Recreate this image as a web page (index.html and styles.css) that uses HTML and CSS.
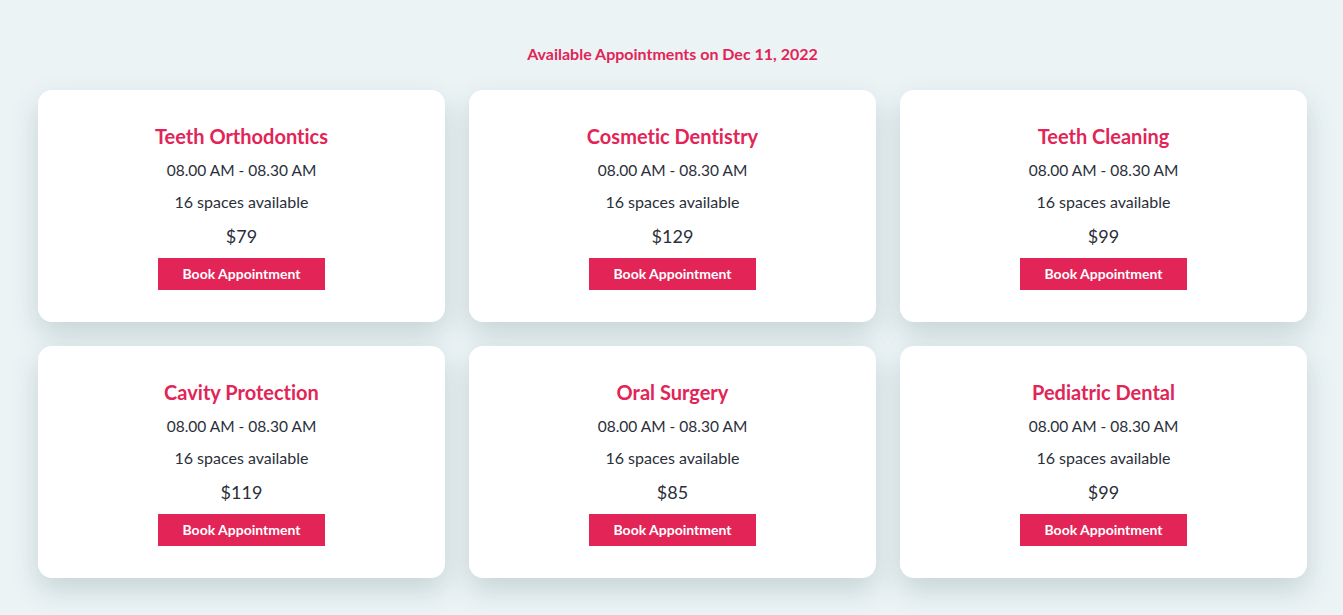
FILE: index.html
```html
<!DOCTYPE html>
<html>
<head>
<meta charset="utf-8">
<link rel="stylesheet" href="styles.css">
</head>
<body>
<main class="page">
  <h1 class="heading">Available Appointments on Dec 11, 2022</h1>
  <div class="grid">
    <div class="card">
      <h2 class="card-title">Teeth Orthodontics</h2>
      <p class="time">08.00 AM - 08.30 AM</p>
      <p class="spaces">16 spaces available</p>
      <p class="price">$79</p>
      <button class="btn">Book Appointment</button>
    </div>
    <div class="card">
      <h2 class="card-title">Cosmetic Dentistry</h2>
      <p class="time">08.00 AM - 08.30 AM</p>
      <p class="spaces">16 spaces available</p>
      <p class="price">$129</p>
      <button class="btn">Book Appointment</button>
    </div>
    <div class="card">
      <h2 class="card-title">Teeth Cleaning</h2>
      <p class="time">08.00 AM - 08.30 AM</p>
      <p class="spaces">16 spaces available</p>
      <p class="price">$99</p>
      <button class="btn">Book Appointment</button>
    </div>
    <div class="card">
      <h2 class="card-title">Cavity Protection</h2>
      <p class="time">08.00 AM - 08.30 AM</p>
      <p class="spaces">16 spaces available</p>
      <p class="price">$119</p>
      <button class="btn">Book Appointment</button>
    </div>
    <div class="card">
      <h2 class="card-title">Oral Surgery</h2>
      <p class="time">08.00 AM - 08.30 AM</p>
      <p class="spaces">16 spaces available</p>
      <p class="price">$85</p>
      <button class="btn">Book Appointment</button>
    </div>
    <div class="card">
      <h2 class="card-title">Pediatric Dental</h2>
      <p class="time">08.00 AM - 08.30 AM</p>
      <p class="spaces">16 spaces available</p>
      <p class="price">$99</p>
      <button class="btn">Book Appointment</button>
    </div>
  </div>
</main>
</body>
</html>
```

FILE: styles.css
```css
html, body {
  margin: 0;
  padding: 0;
  background: #ebf3f5;
  font-family: Lato, "Open Sans", sans-serif;
  color: #2b2f3a;
}
.page {
  padding: 44px 36px 37px 38px;
}
.heading {
  margin: 0 0 26px;
  text-align: center;
  font-size: 16px;
  line-height: 20px;
  font-weight: 700;
  color: #e22457;
}
.grid {
  display: grid;
  grid-template-columns: repeat(3, 407px);
  column-gap: 24px;
  row-gap: 24px;
}
.card {
  background: #fff;
  border-radius: 14px;
  box-shadow: 0 12px 28px rgba(40, 70, 80, 0.18);
  padding: 34px 20px 32px;
  display: flex;
  flex-direction: column;
  align-items: center;
  height: 232px;
  box-sizing: border-box;
}
.card-title {
  margin: 0;
  font-size: 20px;
  line-height: 24px;
  font-weight: 700;
  color: #e22457;
  font-variant-ligatures: none;
}
.time {
  margin: 10px 0 0;
  font-size: 15.5px;
  line-height: 24px;
}
.spaces {
  margin: 8px 0 0;
  font-size: 16px;
  line-height: 24px;
}
.price {
  margin: 9px 0 0;
  font-size: 18px;
  line-height: 26px;
}
.btn {
  margin-top: 9px;
  width: 167px;
  height: 32px;
  border: 0;
  background: #e22457;
  color: #fff;
  font-family: Lato, sans-serif;
  font-size: 14px;
  font-weight: 700;
  padding: 0 0 1px;
  cursor: pointer;
}
```
